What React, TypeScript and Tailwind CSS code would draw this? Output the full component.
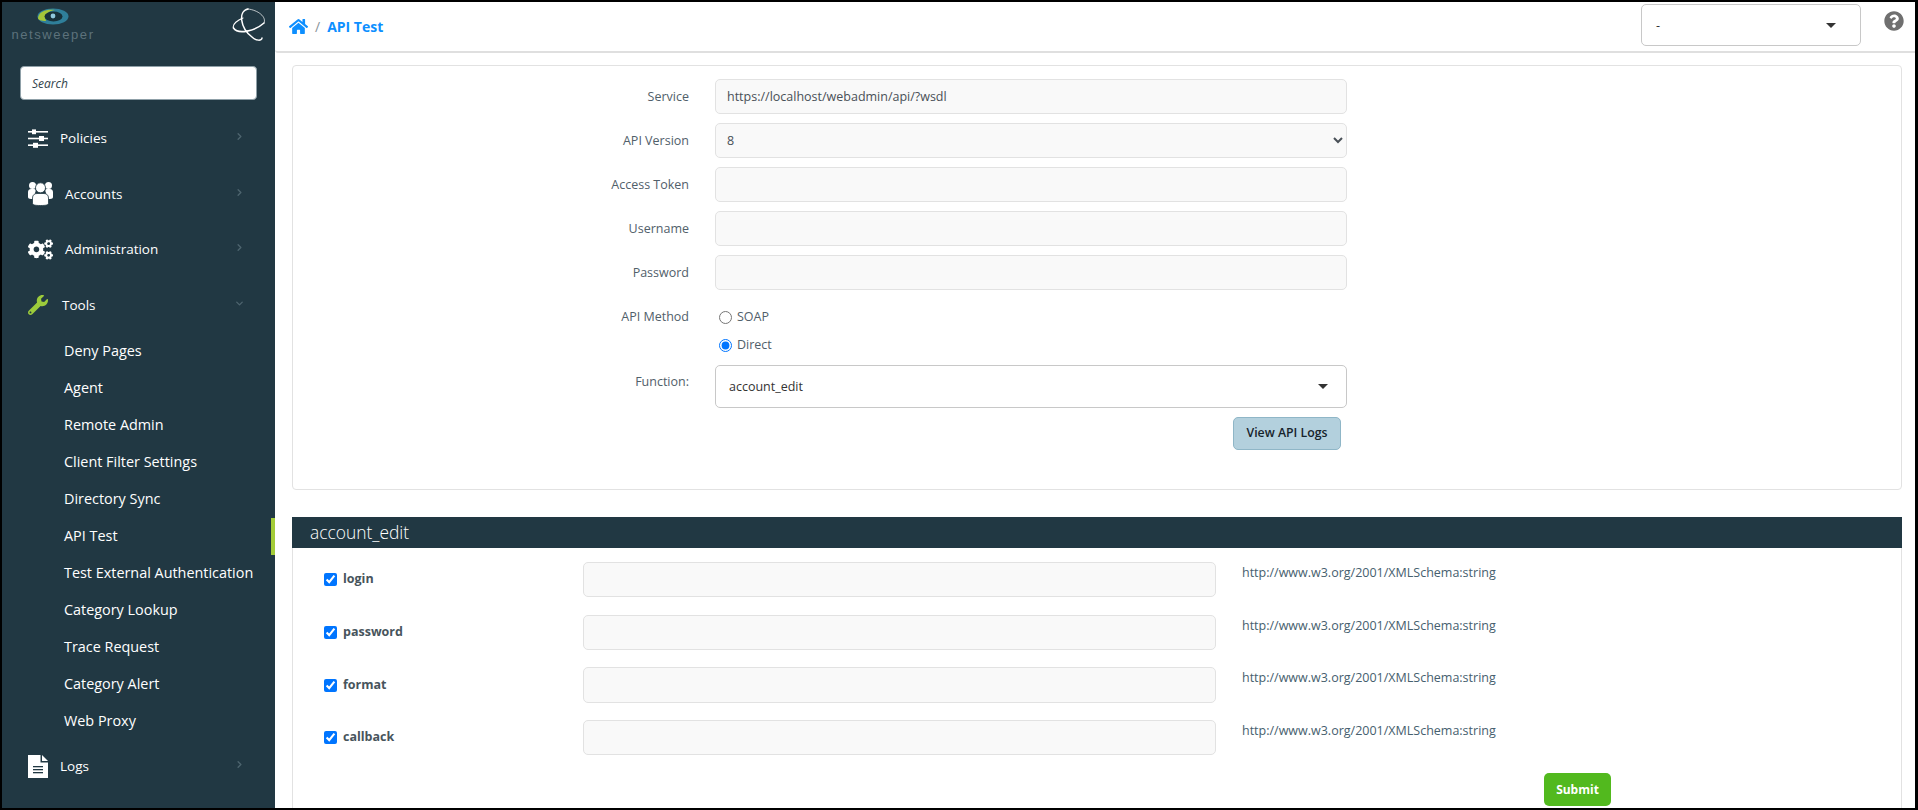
import React from "react";
import { FaCogs, FaWrench, FaHome, FaQuestionCircle } from "react-icons/fa";
import { ChevronRight, ChevronDown } from "lucide-react";

const font = "[font-family:'Open_Sans','Noto_Sans',sans-serif]";

function NavItem({ icon, label, gap, open, h }: { icon: React.ReactNode; label: string; gap: string; open?: boolean; h: string }) {
  return (
    <div className={`flex items-center pl-[26px] pr-[30px] text-[13.5px] text-white ${h}`}>
      <span className={`flex items-center ${gap}`}>{icon}</span>
      <span className="flex-1">{label}</span>
      {open ? (
        <ChevronDown size={11} strokeWidth={3} className="text-[#4d646e] -mt-[4px]" />
      ) : (
        <ChevronRight size={11} strokeWidth={3} className="text-[#4d646e] -mt-[4px]" />
      )}
    </div>
  );
}

const sub = ["Deny Pages", "Agent", "Remote Admin", "Client Filter Settings", "Directory Sync", "API Test", "Test External Authentication", "Category Lookup", "Trace Request", "Category Alert", "Web Proxy"];

function SlidersIcon() {
  return (
    <svg width="20" height="19" viewBox="0 0 20 19" fill="#fff">
      <rect x="0" y="2" width="20" height="1.6" />
      <rect x="0" y="8.7" width="20" height="1.6" />
      <rect x="0" y="15.4" width="20" height="1.6" />
      <rect x="4" y="0.4" width="4" height="4.8" />
      <rect x="11" y="7" width="5" height="5" />
      <rect x="5" y="13.8" width="5" height="5" />
    </svg>
  );
}

function UsersIcon() {
  return (
    <svg width="25" height="24" viewBox="0 0 25 24" fill="#fff">
      <circle cx="4.5" cy="3.6" r="3.5" />
      <circle cx="20.5" cy="3.6" r="3.5" />
      <path d="M0 15V10C0 8 1.5 7 3 7H6C8 7 8 9 7 11V17H3C1 17 0 16 0 15Z" />
      <path d="M25 15V10C25 8 23.5 7 22 7H19C17 7 17 9 18 11V17H22C24 17 25 16 25 15Z" />
      <circle cx="12.5" cy="5.8" r="5" stroke="#213843" strokeWidth="0.8" />
      <path d="M4.5 21V16C4.5 13 6.5 11.5 9 11.5H16C18.5 11.5 20.5 13 20.5 16V21C20.5 23 18 23.5 12.5 23.5 7 23.5 4.5 23 4.5 21Z" stroke="#213843" strokeWidth="0.8" />
    </svg>
  );
}

function DocIcon() {
  return (
    <svg width="20" height="23" viewBox="0 0 20 23">
      <path d="M0 0H12.5V7.5H20V23H0Z" fill="#fff" />
      <path d="M14 0L20 6H14Z" fill="#fff" />
      <rect x="5" y="11" width="10" height="1.3" fill="#213843" />
      <rect x="5" y="14" width="10" height="1.3" fill="#213843" />
      <rect x="5" y="17" width="10" height="1.3" fill="#213843" />
    </svg>
  );
}

function Row({ label, value }: { label: string; value?: string }) {
  return (
    <div className="flex items-center mb-[9px]">
      <label className="w-[396px] mt-[1px] text-right text-[12.5px] text-[#51606a]">{label}</label>
      <input readOnly value={value ?? ""} className="ml-[26px] w-[632px] h-[35px] px-[11px] text-[12.5px] text-[#495057] bg-[#f9f9f9] border border-[#e2e2e2] rounded-[5px]" />
    </div>
  );
}

function Param({ label, mb, tall }: { label: string; mb: string; tall?: boolean }) {
  return (
    <div className={`flex items-start ${mb}`}>
      <div className={`w-[290px] pl-[31px] flex items-center ${tall ? "h-[36px]" : "h-[35px]"}`}>
        <input type="checkbox" defaultChecked className="w-[13px] h-[13px] m-0 accent-[#0075ff]" />
        <span className={`ml-[6px] text-[12.5px] font-bold text-[#47545c] ${tall ? "" : "-mt-[1px]"}`}>{label}</span>
      </div>
      <input readOnly className={`w-[633px] ${tall ? "h-[36px]" : "h-[35px]"} bg-[#f9f9f9] border border-[#e2e2e2] rounded-[5px]`} />
      <span className="ml-[26px] mt-[2px] text-[12.5px] text-[#46606e]">http://www.w3.org/2001/XMLSchema:string</span>
    </div>
  );
}

function Caret() {
  return <span className="w-0 h-0 border-l-[5px] border-r-[5px] border-t-[5px] border-l-transparent border-r-transparent border-t-[#333]" />;
}

export default function App() {
  return (
    <div className={`h-[810px] w-[1918px] border-t-2 border-b-2 border-l-2 border-r-[3px] border-black flex overflow-hidden bg-white ${font}`}>
      <aside className="w-[273px] shrink-0 bg-[#213843] relative">
        <div className="h-[64px] flex justify-between pl-[8px] pr-[7px]">
          <div className="flex flex-col items-center w-[86px] pt-[6px]">
            <svg width="32" height="17" viewBox="0 0 32 17">
              <ellipse cx="16" cy="8.5" rx="15.5" ry="8" fill="#2f7f9a" />
              <path d="M1 10C2 3 10 1 18 2 11 3 7 7 9 13 4 13 1 12 1 10Z" fill="#a4c639" />
              <ellipse cx="16.5" cy="8.5" rx="9" ry="5" fill="#173039" />
              <circle cx="16" cy="8" r="2.4" fill="#8fc7dc" />
            </svg>
            <span className="text-[13px] leading-[14px] mt-[3px] tracking-[1.6px] text-[#5d727b] [font-family:'Liberation_Sans',sans-serif]">netsweeper</span>
          </div>
          <svg width="36" height="36" viewBox="232 7 36 36" className="mt-[5px]" fill="none" stroke="#fff" strokeLinecap="round">
            <path d="M233.5 28C238 35 255 31 264 23" strokeWidth="1.6" />
            <path d="M264 23C267 17 258 10 248 9" strokeWidth="0.7" />
            <path d="M248 9C238 11 240 28 252 37 256 41 262 41 262 38" strokeWidth="1.5" />
            <path d="M233.5 28C232 24 238 20 243 18" strokeWidth="1.1" />
          </svg>
        </div>
        <div className="pl-[18px]">
          <div className="w-[237px] h-[34px] bg-white rounded-[4px] border border-[#8fa0a8] flex items-center pl-[11px] pt-[2px] text-[12px] italic text-[#33434c]">Search</div>
        </div>
        <div className="pt-[10px]">
          <NavItem h="h-[56px]" gap="w-[32px]" label="Policies" icon={<SlidersIcon />} />
          <NavItem h="h-[56px]" gap="w-[37px]" label="Accounts" icon={<UsersIcon />} />
          <NavItem h="h-[55px]" gap="w-[37px]" label="Administration" icon={<FaCogs size={25} color="#fff" />} />
          <NavItem h="h-[56px]" gap="w-[34px]" label="Tools" open icon={<FaWrench size={20} color="#9ccb3b" />} />
          <div>
            {sub.map((s) => (
              <div key={s} className="h-[37px] flex items-center pl-[62px] pb-[1px] text-[14.4px] text-white relative">
                {s}
                {s === "API Test" && <span className="absolute right-0 top-0 w-[4px] h-[37px] bg-[#a4cc39]" />}
              </div>
            ))}
          </div>
          <NavItem h="h-[52px]" gap="w-[32px]" label="Logs" icon={<DocIcon />} />
        </div>
      </aside>
      <main className="flex-1 min-w-0">
        <header className="h-[51px] border-b-2 border-[#dfdfdf] flex items-center pl-[14px] pr-[11px] rounded-bl-[3px]">
          <FaHome size={19} color="#0d8fff" />
          <span className="ml-[7px] text-[14px] text-[#8a949a]">/</span>
          <span className="ml-[7px] text-[14px] font-bold text-[#0d8fff]">API Test</span>
          <div className="ml-auto w-[220px] h-[42px] -mt-[3px] mr-[23px] border border-[#c8c8c8] rounded-[5px] flex items-center justify-between pl-[14px] pr-[24px] text-[12.5px] text-[#333]">
            <span className="mt-[3px]">-</span>
            <Caret />
          </div>
          <FaQuestionCircle size={20} color="#6f6f6f" className="-mt-[12px]" />
        </header>
        <div className="ml-[17px] mr-[13px] mt-[12px]">
          <section className="h-[425px] border border-[#e2e2e2] rounded-[4px] pt-[13px]">
            <Row label="Service" value="https://localhost/webadmin/api/?wsdl" />
            <div className="flex items-center mb-[9px]">
              <label className="w-[396px] mt-[1px] text-right text-[12.5px] text-[#51606a]">API Version</label>
              <select defaultValue="8" className="ml-[26px] w-[632px] h-[35px] px-[7px] text-[12.5px] text-[#495057] bg-[#f9f9f9] border border-[#e2e2e2] rounded-[5px]">
                <option value="8">8</option>
              </select>
            </div>
            <Row label="Access Token" />
            <Row label="Username" />
            <Row label="Password" />
            <div className="mt-[13px]">
              <div className="flex items-center h-[28px]">
                <label className="w-[396px] text-right text-[12.5px] text-[#51606a]">API Method</label>
                <input type="radio" name="m" className="ml-[30px] w-[13px] h-[13px] m-0" />
                <span className="ml-[5px] text-[12.5px] text-[#51606a]">SOAP</span>
              </div>
              <div className="flex items-center h-[28px]">
                <input type="radio" name="m" defaultChecked className="ml-[426px] w-[13px] h-[13px] m-0 accent-[#0075ff]" />
                <span className="ml-[5px] text-[12.5px] text-[#51606a]">Direct</span>
              </div>
            </div>
            <div className="flex items-start mt-[6px]">
              <label className="w-[396px] text-right text-[12.5px] text-[#51606a] mt-[8px]">Function:</label>
              <div className="ml-[26px] w-[632px] h-[43px] border border-[#c8c8c8] rounded-[5px] flex items-center justify-between pl-[13px] pr-[18px] text-[12.5px] text-[#333]">
                <span className="mt-[2px]">account_edit</span>
                <Caret />
              </div>
            </div>
            <div className="w-[1048px] flex justify-end mt-[9px]">
              <button className="w-[108px] h-[33px] bg-[#b3d0dd] border border-[#8fb6c7] rounded-[5px] text-[12.3px] font-semibold text-[#16232b]">View API Logs</button>
            </div>
          </section>
          <div className="mt-[27px] h-[31px] bg-[#213843] text-white text-[17.4px] font-light pl-[18px] flex items-center">account_edit</div>
          <section className="border-l border-r border-[#e2e2e2] pt-[14px] h-[300px]">
            <Param label="login" mb="mb-[18px]" />
            <Param label="password" mb="mb-[17px]" />
            <Param label="format" mb="mb-[17px]" tall />
            <Param label="callback" mb="mb-[18px]" />
            <div className="flex justify-end pr-[290px]">
              <button className="w-[67px] h-[33px] bg-[#52b91e] rounded-[5px] text-white text-[12px] font-bold">Submit</button>
            </div>
          </section>
        </div>
      </main>
    </div>
  );
}
